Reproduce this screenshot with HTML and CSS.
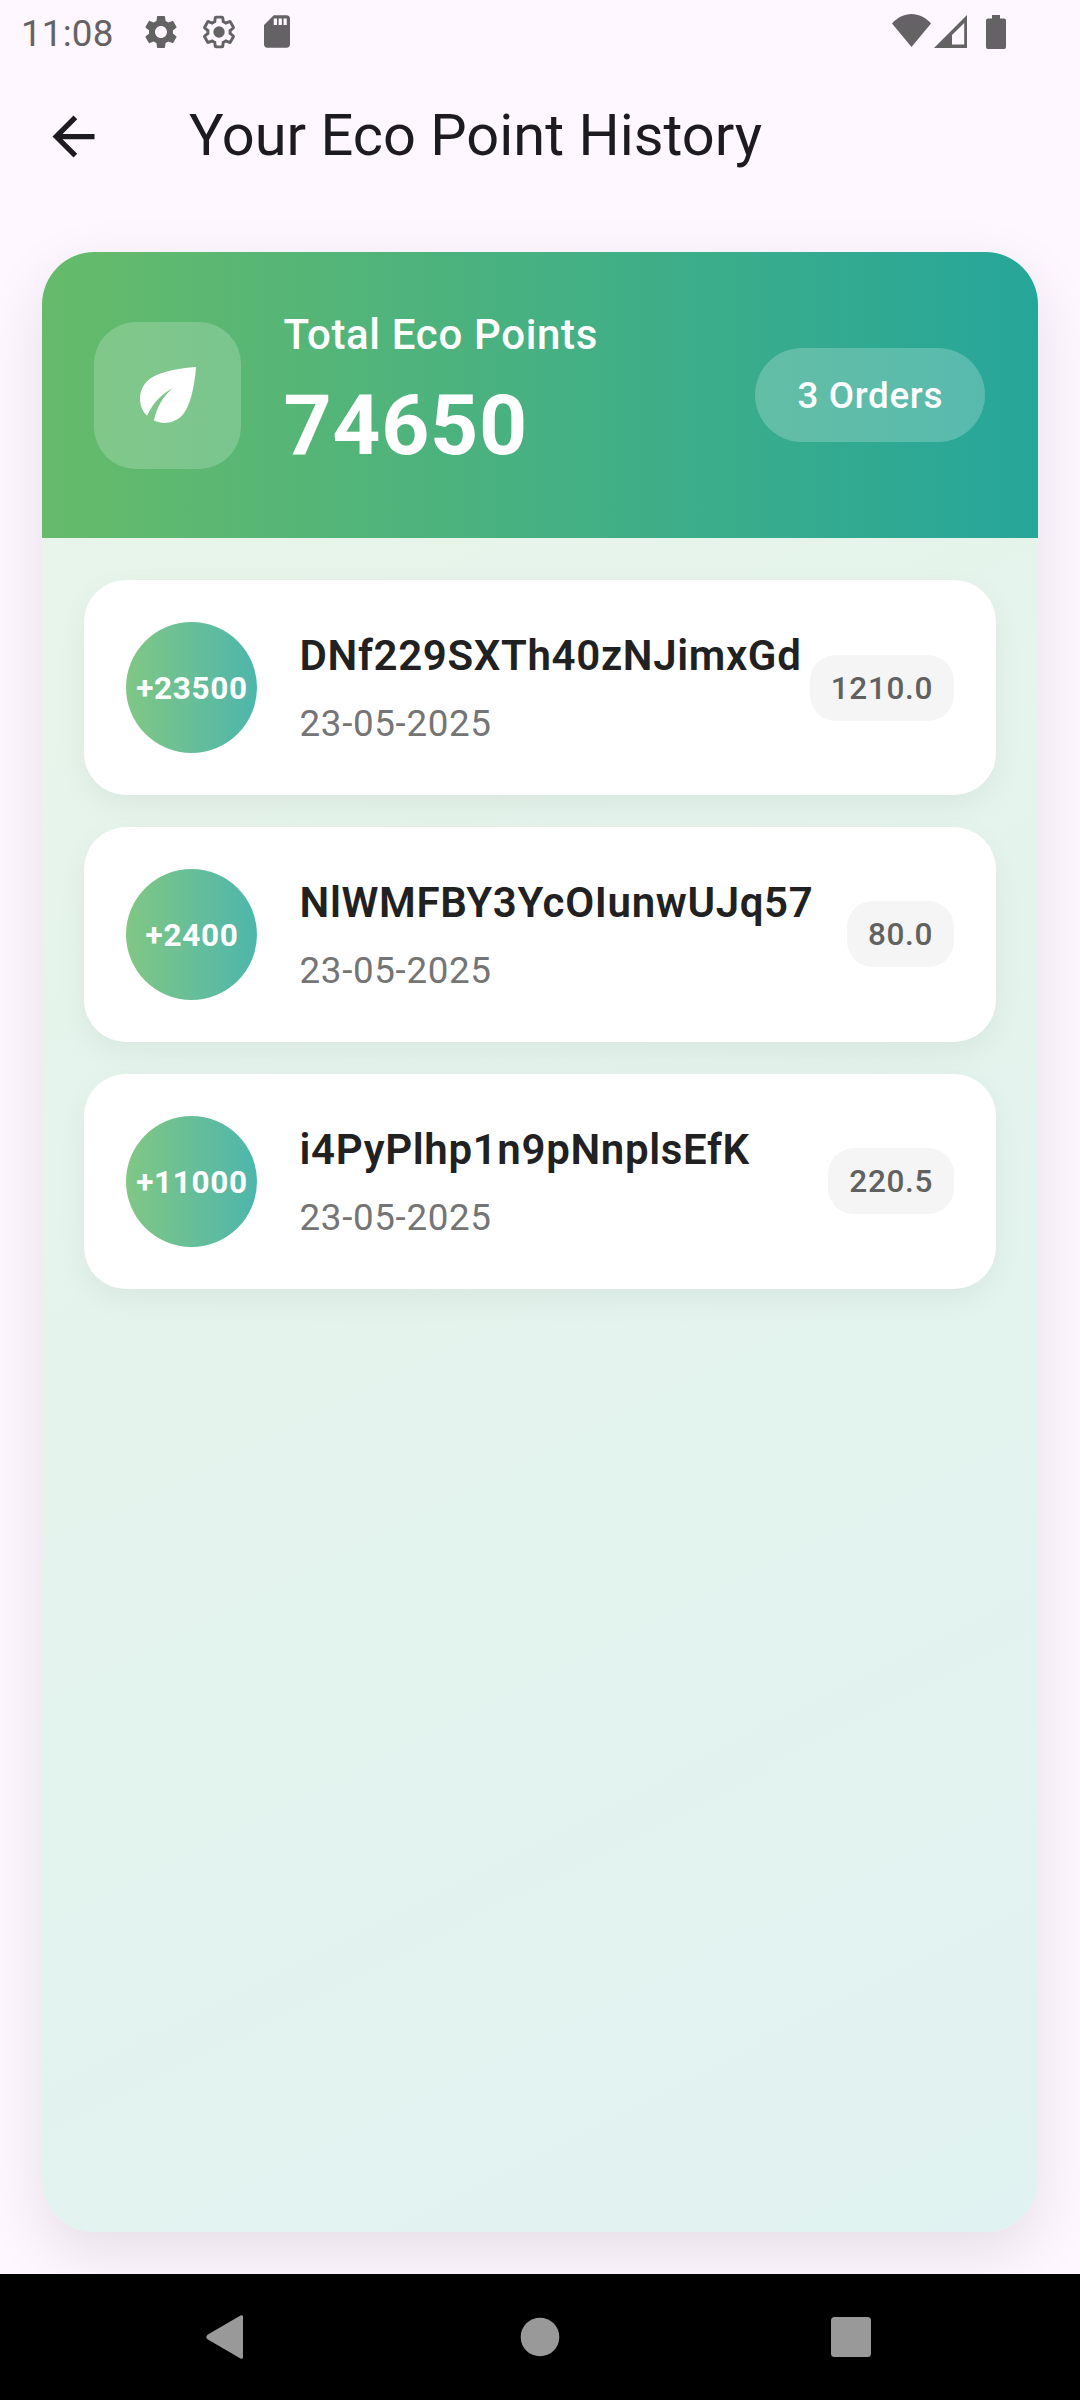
FILE: index.html
```html
<!DOCTYPE html>
<html lang="en">
<head>
<meta charset="utf-8">
<title>Your Eco Point History</title>
<link rel="stylesheet" href="styles.css">
</head>
<body>
<div class="screen">
  <div class="status">
    <span class="clock">11:08</span>
    <svg class="gear" viewBox="0 0 24 24"><path d="M19.14 12.94c.04-.3.06-.61.06-.94 0-.32-.02-.64-.07-.94l2.03-1.58c.18-.14.23-.41.12-.61l-1.92-3.32c-.12-.22-.37-.29-.59-.22l-2.39.96c-.5-.38-1.03-.7-1.62-.94l-.36-2.54c-.04-.24-.24-.41-.48-.41h-3.84c-.24 0-.43.17-.47.41l-.36 2.54c-.59.24-1.13.57-1.62.94l-2.39-.96c-.22-.08-.47 0-.59.22L2.74 8.87c-.12.21-.08.47.12.61l2.03 1.58c-.05.3-.09.63-.09.94s.02.64.07.94l-2.03 1.58c-.18.14-.23.41-.12.61l1.92 3.32c.12.22.37.29.59.22l2.39-.96c.5.38 1.03.7 1.62.94l.36 2.54c.05.24.24.41.48.41h3.84c.24 0 .44-.17.47-.41l.36-2.54c.59-.24 1.13-.56 1.62-.94l2.39.96c.22.08.47 0 .59-.22l1.92-3.32c.12-.22.07-.47-.12-.61l-2.01-1.58zM12 15.6c-1.98 0-3.6-1.62-3.6-3.6s1.62-3.6 3.6-3.6 3.6 1.62 3.6 3.6-1.62 3.6-3.6 3.6z"/></svg>
    <svg class="gear gear-outline" viewBox="0 0 24 24"><path class="ring" d="M19.14 12.94c.04-.3.06-.61.06-.94 0-.32-.02-.64-.07-.94l2.03-1.58c.18-.14.23-.41.12-.61l-1.92-3.32c-.12-.22-.37-.29-.59-.22l-2.39.96c-.5-.38-1.03-.7-1.62-.94l-.36-2.54c-.04-.24-.24-.41-.48-.41h-3.84c-.24 0-.43.17-.47.41l-.36 2.54c-.59.24-1.13.57-1.62.94l-2.39-.96c-.22-.08-.47 0-.59.22L2.74 8.87c-.12.21-.08.47.12.61l2.03 1.58c-.05.3-.09.63-.09.94s.02.64.07.94l-2.03 1.58c-.18.14-.23.41-.12.61l1.92 3.32c.12.22.37.29.59.22l2.39-.96c.5.38 1.03.7 1.62.94l.36 2.54c.05.24.24.41.48.41h3.84c.24 0 .44-.17.47-.41l.36-2.54c.59-.24 1.13-.56 1.62-.94l2.39.96c.22.08.47 0 .59-.22l1.92-3.32c.12-.22.07-.47-.12-.61l-2.01-1.58z"/><circle cx="12" cy="12" r="3.4"/></svg>
    <svg class="sd" viewBox="0 0 16 20"><path d="M14 0H6L0 6v12c0 1.1.9 2 2 2h12c1.100 0 2-.9 2-2V2c0-1.100-.9-2-2-2zM8 6H6V2h2v4zm3 0H9V2h2v4zm3 0h-2V2h2v4z"/></svg>
    <svg class="wifi" viewBox="0 0 39 33"><path d="M19.500 33 0 9.500C5.500 3.500 12 0 19.500 0S33.500 3.500 39 9.500z"/></svg>
    <svg class="signal" viewBox="0 0 33 33"><path fill-rule="evenodd" d="M33 0v33H0zM30.200 8 18 20v9.500h12.200z"/></svg>
    <svg class="battery" viewBox="0 0 20 34"><path d="M6 0h8v3.500h4a2 2 0 0 1 2 2V32a2 2 0 0 1-2 2H2a2 2 0 0 1-2-2V5.500a2 2 0 0 1 2-2h4z"/></svg>
  </div>
  <header class="appbar">
    <svg class="back" viewBox="0 0 24 24"><path d="M20 11H7.830l5.590-5.590L12 4l-8 8 8 8 1.410-1.410L7.830 13H20z"/></svg>
    <h1 class="title">Your Eco Point History</h1>
  </header>
  <main class="panel">
    <section class="summary">
      <div class="leaf-box">
        <svg class="leaf" viewBox="0 0 24 24"><path d="M6.050 8.050c-2.730 2.730-2.730 7.150-.02 9.880 1.470-3.400 4.090-6.240 7.360-7.930-2.770 2.340-4.710 5.610-5.390 9.320 2.600 1.230 5.800.78 7.950-1.370C19.430 14.470 20 4 20 4S9.530 4.570 6.050 8.050z"/></svg>
      </div>
      <div class="total">
        <div class="total-label">Total Eco Points</div>
        <div class="total-value">74650</div>
      </div>
      <div class="orders">3 Orders</div>
    </section>
    <div class="list">
      <article class="item">
        <div class="points">+23500</div>
        <div class="info"><div class="order-id">DNf229SXTh40zNJimxGd</div><div class="date">23-05-2025</div></div>
        <div class="amount">1210.0</div>
      </article>
      <article class="item">
        <div class="points">+2400</div>
        <div class="info"><div class="order-id">NlWMFBY3YcOIunwUJq57</div><div class="date">23-05-2025</div></div>
        <div class="amount">80.0</div>
      </article>
      <article class="item">
        <div class="points">+11000</div>
        <div class="info"><div class="order-id">i4PyPlhp1n9pNnplsEfK</div><div class="date">23-05-2025</div></div>
        <div class="amount">220.5</div>
      </article>
    </div>
  </main>
  <nav class="navbar">
    <svg class="nav-icon" viewBox="0 0 44 44"><path d="M38 1.800V42.200a1.500 1.500 0 0 1-2.500 1.200L2.500 24.300a3.200 3.200 0 0 1 0-4.600L35.500.6A1.500 1.500 0 0 1 38 1.800z"/></svg>
    <svg class="nav-icon nav-home" viewBox="0 0 44 44"><circle cx="22" cy="22" r="19.300"/></svg>
    <svg class="nav-icon" viewBox="0 0 44 44"><rect x="2" y="2" width="40" height="40" rx="3.500"/></svg>
  </nav>
</div>
</body>
</html>
```
FILE: styles.css
```css
* { box-sizing: border-box; }
body { margin: 0; background: #fef7ff; font-family: Roboto, sans-serif; letter-spacing: 0.66px; line-height: 1.43; }
svg { display: block; flex: none; }
.screen { width: 1080px; height: 2400px; display: flex; flex-direction: column; overflow: hidden; }

.status { height: 63px; flex: none; display: flex; align-items: center; padding-left: 21px; color: #656266; fill: #656266; }
.clock { width: 120px; font-size: 36.75px; line-height: 43px; letter-spacing: 0.2px; padding-top: 3px; }
.gear { width: 40px; height: 40px; margin-right: 18px; }
.gear-outline .ring { fill: none; stroke: #656266; stroke-width: 1.9; transform: scale(0.93); transform-origin: 12px 12px; }
.sd { width: 26px; height: 33px; margin-left: 7px; }
.wifi { width: 39px; height: 33px; margin: 0 3px 2px auto; }
.signal { width: 33px; height: 33px; margin: 0 19px 1px 0; }
.battery { width: 20px; height: 34px; margin-right: 74px; }

.appbar { height: 147px; flex: none; display: flex; align-items: center; padding-left: 42px; }
.back { width: 63px; height: 63px; fill: #1d1b20; }
.title { margin: 0 0 3px 84px; font-size: 57.75px; font-weight: 400; line-height: 73px; letter-spacing: 0; color: #1d1b20; }

.panel { flex: 1; margin: 42px; border-radius: 52.5px; overflow: hidden; background: linear-gradient(153.3deg, #e8f5e9, #e0f2f1); box-shadow: 0 21px 61px rgba(0, 0, 0, 0.1); }
.summary { height: 286px; display: flex; align-items: center; padding: 0 53px 0 52px; background: linear-gradient(90deg, #66bb6a, #26a69a); color: #fff; }
.leaf-box { width: 147px; height: 147px; border-radius: 42px; background: rgba(255, 255, 255, 0.2); display: grid; place-items: center; }
.leaf { width: 84px; height: 84px; fill: #fff; }
.total { flex: 1; margin-left: 42.5px; }
.total-label { font-size: 42px; font-weight: 500; line-height: 60px; padding-top: 1px; }
.total-value { font-size: 84px; font-weight: 700; line-height: 121px; }
.orders { height: 94px; padding: 0 42px; border-radius: 47px; background: rgba(255, 255, 255, 0.22); font-size: 36.75px; line-height: 95px; font-weight: 500; }

.list { padding: 42px; display: flex; flex-direction: column; gap: 32px; }
.item { height: 215px; display: flex; align-items: center; padding: 0 42px; border-radius: 42px; background: #fff; box-shadow: 0 10.5px 31px rgba(0, 0, 0, 0.05); }
.item + .item { margin-top: -0.25px; }
.points { width: 131px; height: 131px; flex: none; padding-left: 1px; border-radius: 50%; background: linear-gradient(90deg, #81c784, #4db6ac); color: #fff; font-size: 31.5px; font-weight: 700; line-height: 134px; text-align: center; white-space: nowrap; }
.info { flex: 1; margin-left: 42.5px; padding-top: 2px; white-space: nowrap; }
.order-id { font-size: 42px; font-weight: 600; color: #212121; }
.date { margin-top: 11.5px; font-size: 36.75px; color: #757575; }
.amount { flex: none; height: 66px; padding: 0 21px; border-radius: 26px; background: #f5f5f5; font-size: 31.5px; font-weight: 500; line-height: 68px; color: #616161; }

.navbar { height: 126px; flex: none; display: flex; align-items: center; justify-content: space-between; padding: 0 207px 0 205px; background: #000; fill: #999; }
.nav-icon { width: 44px; height: 44px; }
.nav-home { margin-left: 2px; }
```
